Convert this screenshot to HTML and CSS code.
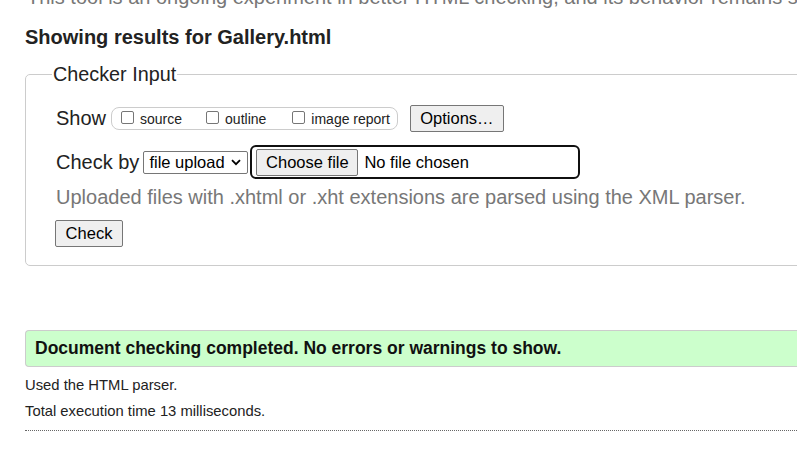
FILE: index.html
```html
<!DOCTYPE html>
<html lang="en">
<head>
<meta charset="utf-8">
<title>Nu Html Checker</title>
<link rel="stylesheet" href="styles.css">
</head>
<body>
<div class="page">
  <p class="intro">This tool is an ongoing experiment in better HTML checking, and its behavior remains subject to change</p>
  <h2 class="title">Showing results for Gallery.html</h2>
  <fieldset class="checker">
    <legend class="legend">Checker Input</legend>
    <div class="row show-row">
      <span class="row-label">Show</span>
      <div class="show-box">
        <label class="opt opt-source"><span class="cb"></span>source</label>
        <label class="opt opt-outline"><span class="cb"></span>outline</label>
        <label class="opt"><span class="cb"></span>image report</label>
      </div>
      <button class="btn options-btn" type="button">Options…</button>
    </div>
    <div class="row check-row">
      <span class="row-label">Check by</span>
      <div class="select">
        <span>file upload</span>
        <svg class="chev" width="10" height="7" viewBox="0 0 10 7"><path d="M1 1.2 L5 5.2 L9 1.2" fill="none" stroke="#000" stroke-width="1.8"/></svg>
      </div>
      <div class="file">
        <span class="btn file-btn">Choose file</span>
        <span class="file-name">No file chosen</span>
      </div>
    </div>
    <p class="hint">Uploaded files with .xhtml or .xht extensions are parsed using the XML parser.</p>
    <div class="submit-row">
      <button class="btn check-btn" type="button">Check</button>
    </div>
  </fieldset>
  <p class="success">Document checking completed. No errors or warnings to show.</p>
  <p class="details">Used the HTML parser.</p>
  <p class="details second">Total execution time 13 milliseconds.</p>
  <div class="rule"></div>
</div>
</body>
</html>
```

FILE: styles.css
```css
html, body {
  margin: 0;
  padding: 0;
  overflow: hidden;
  background: #fff;
}
body {
  font-family: "Liberation Sans", Arial, sans-serif;
  color: #222;
}
.page {
  width: 900px;
  padding-left: 25px;
}
.intro {
  margin: -14px 0 0 2px;
  font-size: 20px;
  line-height: 23px;
  color: #777;
  white-space: nowrap;
}
.title {
  margin: 17px 0 0 0;
  font-size: 20px;
  line-height: 23px;
  font-weight: bold;
}
.checker {
  margin: 14px 0 0 0;
  padding: 19px 0 18px 30px;
  border: 1px solid #ccc;
  border-radius: 5px;
  min-width: 0;
}
.legend {
  font-size: 19.8px;
  line-height: 23px;
  padding: 0 1px;
  margin-left: -4px;
}
.row {
  display: flex;
  align-items: center;
}
.row-label {
  font-size: 20px;
  line-height: 23px;
}
.show-row {
  height: 27px;
}
.show-box {
  margin-left: 5px;
  height: 21px;
  display: flex;
  align-items: center;
  border: 1px solid #ccc;
  border-radius: 8px;
  padding: 0 7px 0 9px;
  gap: 12px;
}
.opt {
  display: flex;
  align-items: center;
  font-size: 14px;
  line-height: 16px;
}
.opt-source {
  padding-right: 12px;
}
.opt-outline {
  padding-right: 14px;
}
.cb {
  width: 11px;
  height: 11px;
  border: 1px solid #767676;
  border-radius: 2px;
  background: #fff;
  margin: 0 6px 3px 0;
}
.btn {
  font-family: "Liberation Sans", Arial, sans-serif;
  font-size: 16.5px;
  line-height: 19px;
  color: #000;
  background: #efefef;
  border: 1px solid #767676;
  border-radius: 2px;
  box-sizing: border-box;
  display: inline-flex;
  align-items: center;
  justify-content: center;
}
.options-btn {
  margin-left: 12px;
  width: 94px;
  height: 27px;
  padding: 0;
}
.check-row {
  margin-top: 13px;
  height: 34px;
}
.select {
  margin-left: 4px;
  width: 105px;
  height: 23px;
  box-sizing: border-box;
  border: 1px solid #767676;
  border-radius: 2px;
  display: flex;
  align-items: center;
  justify-content: space-between;
  padding: 0 6px 0 5px;
  font-size: 16.5px;
  color: #000;
}
.chev {
  display: block;
}
.file {
  margin-left: 2px;
  width: 330px;
  height: 34px;
  box-sizing: border-box;
  border: 2px solid #101010;
  border-radius: 6px;
  display: flex;
  align-items: center;
  padding-left: 4px;
}
.file-btn {
  width: 102px;
  height: 27px;
}
.file-name {
  margin-left: 6px;
  font-size: 16.5px;
  color: #000;
}
.hint {
  margin: 7px 0 0 0;
  font-size: 20px;
  line-height: 23px;
  color: #777;
}
.submit-row {
  margin-top: 11px;
  display: flex;
}
.check-btn {
  margin-left: -1px;
  width: 68px;
  height: 27px;
  padding: 0;
}
.success {
  margin: 64px 0 0 0;
  background: #ccffcc;
  border: 1px solid #ccc;
  border-right: none;
  border-radius: 4px 0 0 4px;
  padding: 0 0 0 9px;
  height: 35px;
  display: flex;
  align-items: center;
  font-size: 17.5px;
  font-weight: bold;
  color: #111;
}
.details {
  margin: 10px 0 0 0;
  font-size: 14.8px;
  line-height: 17px;
  color: #222;
}
.details.second {
  margin-top: 9px;
}
.rule {
  margin-top: 10px;
  border-top: 1px dotted #666;
}
```
